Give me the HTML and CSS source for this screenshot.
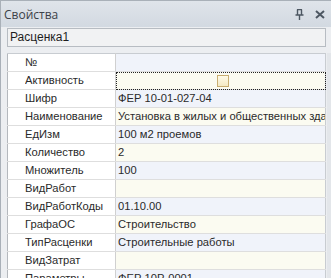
FILE: index.html
```html
<!DOCTYPE html>
<html lang="ru">
<head>
    <meta charset="UTF-8">
    <meta name="viewport" content="width=device-width, initial-scale=1.0">
    <title>Свойства</title>
    <link rel="stylesheet" href="styles.css">
</head>
<body>
    <div class="panel">
        <div class="header">
            <span class="title">Свойства</span>
            <span class="tools">
                <svg class="pin" width="9" height="11" viewBox="0 0 9 11">
                    <path d="M2 0.5h5M2.5 0.5v5M6.5 0.5v5M0.5 6h8M4.5 6v5" stroke="#4d5762" stroke-width="1.4" fill="none"/>
                </svg>
                <svg class="close" width="10" height="9" viewBox="0 0 10 9">
                    <path d="M1 1l8 7M9 1l-8 7" stroke="#4d5762" stroke-width="2" fill="none"/>
                </svg>
            </span>
        </div>
        <div class="object-box">Расценка1</div>
        <div class="grid-wrap">
            <table class="grid">
                <tr><td class="gut"></td><td class="name">№</td><td class="val"></td></tr>
                <tr class="focus"><td class="gut"></td><td class="name">Активность</td><td class="val"><span class="check"></span></td></tr>
                <tr><td class="gut"></td><td class="name">Шифр</td><td class="val">ФЕР 10-01-027-04</td></tr>
                <tr><td class="gut"></td><td class="name">Наименование</td><td class="val">Установка в жилых и общественных зданиях блоков оконных</td></tr>
                <tr><td class="gut"></td><td class="name">ЕдИзм</td><td class="val">100 м2 проемов</td></tr>
                <tr><td class="gut"></td><td class="name">Количество</td><td class="val">2</td></tr>
                <tr><td class="gut"></td><td class="name">Множитель</td><td class="val">100</td></tr>
                <tr><td class="gut"></td><td class="name">ВидРабот</td><td class="val"></td></tr>
                <tr><td class="gut"></td><td class="name">ВидРаботКоды</td><td class="val">01.10.00</td></tr>
                <tr><td class="gut"></td><td class="name">ГрафаОС</td><td class="val">Строительство</td></tr>
                <tr><td class="gut"></td><td class="name">ТипРасценки</td><td class="val">Строительные работы</td></tr>
                <tr><td class="gut"></td><td class="name">ВидЗатрат</td><td class="val"></td></tr>
                <tr><td class="gut"></td><td class="name">Параметры</td><td class="val">ФЕР 10Р-0001</td></tr>
            </table>
        </div>
    </div>
</body>
</html>
```

FILE: styles.css
```css
body {
    margin: 0;
    font-family: "Liberation Sans", Arial, sans-serif;
    background-color: #eef0f3;
}

.panel {
    width: 331px;
    height: 278px;
    box-sizing: border-box;
    border-left: 1px solid #a9b0b8;
    border-top: 1px solid #a9b0b8;
    background-color: #eceef1;
    overflow: hidden;
}

.header {
    height: 26px;
    display: flex;
    align-items: center;
    justify-content: space-between;
    padding: 0 6px 0 3px;
    background: linear-gradient(#dfe4ea, #d2d9e1);
}

.title {
    font-family: "Open Sans", sans-serif;
    font-size: 12px;
    color: #3c4148;
}

.tools {
    display: flex;
    align-items: center;
    gap: 11px;
}

.object-box {
    margin: 1px 5px 0 6px;
    height: 17px;
    line-height: 17px;
    padding-left: 2px;
    border: 1px solid #b7bcc2;
    background-color: #f1f2f3;
    font-size: 12px;
    color: #1e1e1e;
}

.grid-wrap {
    margin: 6px 0 0 6px;
    border-right: 4px solid #e3e6ea;
    box-shadow: 1px 0 0 #b4bac1;
}

.grid {
    width: 319px;
    table-layout: fixed;
    border-collapse: collapse;
    border-left: 1px solid #b4b8bd;
    border-top: 1px solid #c8ccd1;
    border-right: 1px solid #c8ccd1;
    font-size: 11.2px;
    color: #2a2a2a;
}

.grid td {
    padding: 0;
    line-height: 17px;
    border-bottom: 1px solid #dedede;
    white-space: nowrap;
    overflow: hidden;
}

.gut {
    width: 17px;
    background-color: #fff;
}

.name {
    width: 90px;
    padding-left: 1px;
    background-color: #fff;
    border-right: 1px solid #d0d0d0;
}

.grid td.val {
    padding-left: 2px;
    background-color: #f0f3fa;
}

.grid tr:nth-child(even) td.val {
    background-color: #fbfbf1;
}

.focus td.val {
    outline: 1px dotted #222;
    outline-offset: -1px;
    text-align: center;
}

.check {
    display: inline-block;
    width: 10px;
    height: 10px;
    margin-left: 2px;
    vertical-align: middle;
    border: 1px solid #c9ae72;
    background: linear-gradient(#fffbe8, #f4e9c4);
}
```
